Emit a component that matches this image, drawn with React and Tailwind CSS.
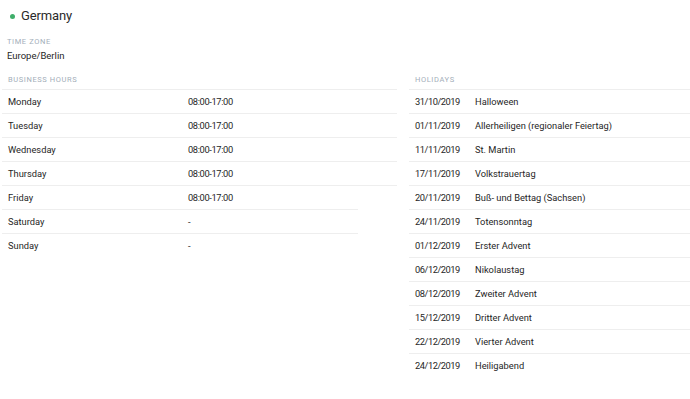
import React from "react";

const hours = [
  ["Monday", "08:00-17:00", true],
  ["Tuesday", "08:00-17:00", true],
  ["Wednesday", "08:00-17:00", true],
  ["Thursday", "08:00-17:00", true],
  ["Friday", "08:00-17:00", true],
  ["Saturday", "-", false],
  ["Sunday", "-", false],
];

const holidays = [
  ["31/10/2019", "Halloween"],
  ["01/11/2019", "Allerheiligen (regionaler Feiertag)"],
  ["11/11/2019", "St. Martin"],
  ["17/11/2019", "Volkstrauertag"],
  ["20/11/2019", "Buß- und Bettag (Sachsen)"],
  ["24/11/2019", "Totensonntag"],
  ["01/12/2019", "Erster Advent"],
  ["06/12/2019", "Nikolaustag"],
  ["08/12/2019", "Zweiter Advent"],
  ["15/12/2019", "Dritter Advent"],
  ["22/12/2019", "Vierter Advent"],
  ["24/12/2019", "Heiligabend"],
];

export default function App() {
  return (
    <div className="w-[690px] h-[399px] bg-white text-[#262626] font-['Roboto',sans-serif] overflow-hidden">
      <div className="h-[32px] flex items-center pl-[10px]">
        <span className="w-[5px] h-[5px] rounded-full bg-[#3fae6a]" />
        <span className="ml-[6px] text-[13px] leading-[20px] tracking-[-0.01em] text-[#2a2a2a]">Germany</span>
      </div>
      <div className="pl-[7px]">
        <div className="mt-[4px] h-[12px] leading-[12px] text-[7.5px] tracking-[0.08em] uppercase text-[#a3aeb9]">
          Time zone
        </div>
        <div className="mt-[1px] h-[14px] leading-[14px] text-[9.5px]">Europe/Berlin</div>
      </div>
      <div className="mt-[11px] pl-[2px] grid grid-cols-[395px_281px] gap-x-[12px]">
        <div>
          <div className="h-[15px] pl-[6px] leading-[12px] text-[7.5px] tracking-[0.08em] uppercase text-[#a3aeb9]">
            Business hours
          </div>
          {hours.map(([d, t, full]) => (
            <div
              key={d}
              className={
                "h-[24px] border-t border-[#eeeeee] flex items-center pl-[6px] text-[9.3px] " +
                (full ? "w-[395px]" : "w-[356px]")
              }
            >
              <span className="w-[180px]">{d}</span>
              <span className="tracking-[-0.04em]">{t}</span>
            </div>
          ))}
        </div>
        <div>
          <div className="h-[15px] pl-[6px] leading-[12px] text-[7.5px] tracking-[0.08em] uppercase text-[#a3aeb9]">
            Holidays
          </div>
          {holidays.map(([d, n]) => (
            <div
              key={d}
              className="h-[24px] border-t border-[#eeeeee] flex items-center pl-[6px] text-[9.3px]"
            >
              <span className="w-[60px] tracking-[-0.05em]">{d}</span>
              <span>{n}</span>
            </div>
          ))}
        </div>
      </div>
    </div>
  );
}
